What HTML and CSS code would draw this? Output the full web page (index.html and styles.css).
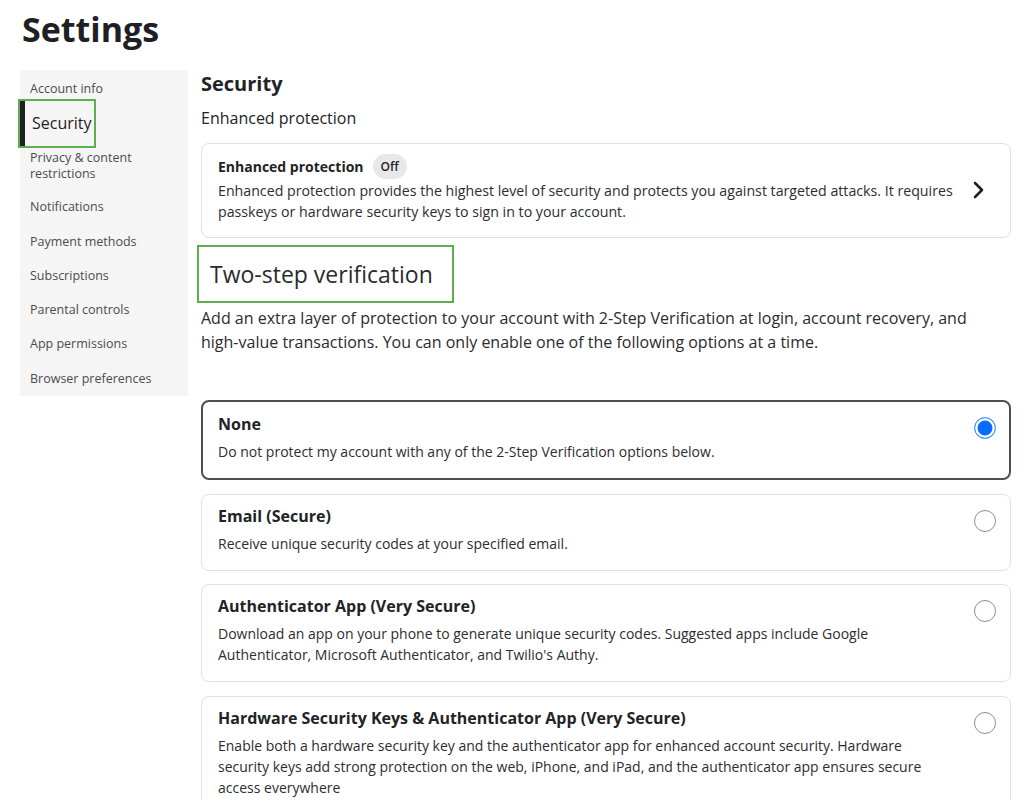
FILE: index.html
```html
<!DOCTYPE html>
<html lang="en">
<head>
  <meta charset="UTF-8">
  <meta name="viewport" content="width=device-width, initial-scale=1.0">
  <title>Settings</title>
  <link rel="stylesheet" href="styles.css">
</head>
<body>
  <h1 class="page-title">Settings</h1>
  <div class="layout">
    <ul class="sidebar">
      <li class="nav-item">Account info</li>
      <li class="nav-item nav-active"><span>Security</span></li>
      <li class="nav-item">Privacy &amp; content<br>restrictions</li>
      <li class="nav-item">Notifications</li>
      <li class="nav-item">Payment methods</li>
      <li class="nav-item">Subscriptions</li>
      <li class="nav-item">Parental controls</li>
      <li class="nav-item">App permissions</li>
      <li class="nav-item">Browser preferences</li>
    </ul>

    <main class="content">
      <h2 class="section-title">Security</h2>
      <p class="subsection">Enhanced protection</p>

      <div class="card protect-card">
        <div class="protect-text">
          <div class="card-head">
            <span class="protect-title">Enhanced protection</span>
            <span class="pill">Off</span>
          </div>
          <p class="card-desc">Enhanced protection provides the highest level of security and protects you against targeted attacks. It requires passkeys or hardware security keys to sign in to your account.</p>
        </div>
        <svg class="chevron" width="14" height="18" viewBox="0 0 14 18">
          <polyline points="3,2 10,9 3,16" fill="none" stroke="#1f2024" stroke-width="2.6" stroke-linecap="round" stroke-linejoin="round"/>
        </svg>
      </div>

      <h3 class="twostep-title">Two-step verification</h3>
      <p class="intro">Add an extra layer of protection to your account with 2-Step Verification at login, account recovery, and high-value transactions. You can only enable one of the following options at a time.</p>

      <div class="options">
        <div class="card option selected">
          <div class="option-text">
            <div class="option-title">None</div>
            <p class="card-desc">Do not protect my account with any of the 2-Step Verification options below.</p>
          </div>
          <span class="radio checked"></span>
        </div>
        <div class="card option">
          <div class="option-text">
            <div class="option-title">Email (Secure)</div>
            <p class="card-desc">Receive unique security codes at your specified email.</p>
          </div>
          <span class="radio"></span>
        </div>
        <div class="card option">
          <div class="option-text">
            <div class="option-title">Authenticator App (Very Secure)</div>
            <p class="card-desc">Download an app on your phone to generate unique security codes. Suggested apps include Google Authenticator, Microsoft Authenticator, and Twilio's Authy.</p>
          </div>
          <span class="radio"></span>
        </div>
        <div class="card option">
          <div class="option-text">
            <div class="option-title">Hardware Security Keys &amp; Authenticator App (Very Secure)</div>
            <p class="card-desc">Enable both a hardware security key and the authenticator app for enhanced account security. Hardware security keys add strong protection on the web, iPhone, and iPad, and the authenticator app ensures secure access everywhere</p>
          </div>
          <span class="radio"></span>
        </div>
      </div>
    </main>
  </div>
</body>
</html>
```

FILE: styles.css
```css
body {
  font-family: 'Open Sans', 'Noto Sans', sans-serif;
  margin: 0;
  padding: 0 13px 0 20px;
  color: #222326;
  background: #fff;
}

p {
  margin: 0;
}

.page-title {
  font-size: 34px;
  font-weight: 700;
  line-height: 44px;
  margin: 7px 0 19px 2px;
  color: #1f2024;
}

.layout {
  display: flex;
  align-items: flex-start;
  gap: 13px;
}

.sidebar {
  list-style: none;
  margin: 0;
  padding: 2px 0 0;
  width: 168px;
  flex-shrink: 0;
  background: #f5f5f5;
}

.nav-item {
  padding: 8px 10px;
  font-size: 12.5px;
  line-height: 18.3px;
  color: #4b4c50;
}

.nav-item:nth-child(3) {
  line-height: 16px;
}

.nav-active {
  width: fit-content;
  padding: 0 2px 0 0;
  margin: -7px 0 -6px -2px;
  border: 2px solid #5cae4f;
}

.nav-active span {
  display: block;
  border-left: 5px solid #1f2024;
  padding: 12px 0 12px 7px;
  font-size: 16px;
  line-height: 21px;
  color: #1f2024;
}

.content {
  flex: 1;
  min-width: 0;
}

.section-title {
  font-size: 20px;
  font-weight: 700;
  line-height: 28px;
  margin: 0 0 8px;
}

.subsection {
  font-size: 16px;
  line-height: 24px;
  margin-bottom: 13px;
}

.card {
  border: 1px solid #e2e2e4;
  border-radius: 8px;
  background: #fff;
}

.protect-card {
  display: flex;
  align-items: center;
  padding: 10px 24px 15px 16px;
}

.protect-text {
  flex: 1;
}

.card-head {
  display: flex;
  align-items: center;
  gap: 9px;
}

.protect-title {
  font-size: 14px;
  font-weight: 700;
  line-height: 20px;
}

.pill {
  background: #e8e8ea;
  border-radius: 13px;
  padding: 0 8px;
  font-size: 12px;
  font-weight: 600;
  line-height: 25px;
}

.card-desc {
  font-size: 14px;
  line-height: 21px;
  color: #2c2d31;
}

.protect-card .card-desc {
  margin-top: 1px;
  padding-right: 4px;
  font-size: 14.2px;
}

.chevron {
  flex-shrink: 0;
  margin-top: 4px;
}

.twostep-title {
  display: inline-block;
  margin: 7px 0 3px -4px;
  padding: 12px 19px 12px 11px;
  border: 2px solid #5cae4f;
  font-size: 23px;
  font-weight: 400;
  line-height: 30px;
  color: #2a2b2f;
}

.intro {
  font-size: 16px;
  line-height: 24px;
  color: #2a2b2f;
  padding-right: 30px;
  margin-bottom: 46px;
}

.options {
  display: flex;
  flex-direction: column;
  gap: 13.5px;
}

.option {
  display: flex;
  align-items: flex-start;
  padding: 10px 16px 16px;
}

.option.selected {
  border: 2px solid #4c4f57;
  padding: 11px 15px 16px;
}

.option-text {
  flex: 1;
  padding-right: 50px;
}

.option-title {
  font-size: 16px;
  font-weight: 700;
  line-height: 22px;
  margin-bottom: 6px;
}

.radio {
  flex-shrink: 0;
  width: 22px;
  height: 22px;
  border-radius: 50%;
  box-sizing: border-box;
  border: 1.5px solid #8e8e92;
  margin-top: 5px;
  margin-right: -2px;
}

.option.selected .radio {
  margin-top: 4px;
}

.radio.checked {
  border: 1.5px solid #4a9bff;
  background: #0a6cff;
  box-shadow: inset 0 0 0 2.5px #fff;
}
```
